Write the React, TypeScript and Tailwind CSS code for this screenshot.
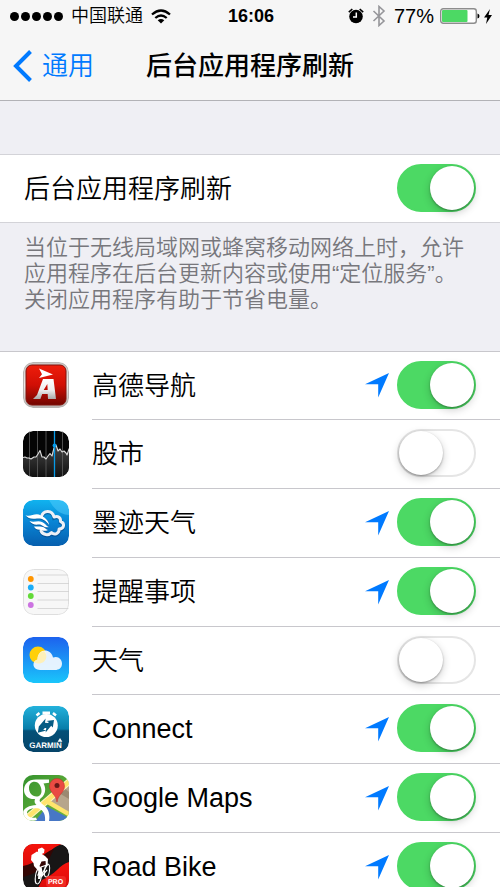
import { useState } from "react";
import type { ReactNode } from "react";

function Switch({ id, checked, onChange }: { id: string; checked: boolean; onChange: () => void }) {
  return (
    <input
      id={id}
      type="checkbox"
      role="switch"
      checked={checked}
      onChange={onChange}
      className="mb-[2px] h-12 w-[79px] shrink-0 cursor-pointer appearance-none rounded-full border-2 border-[#e5e5e5] bg-white transition-colors before:block before:size-11 before:rounded-full before:bg-white before:shadow-[0_3px_8px_rgba(0,0,0,0.2),0_1px_2px_rgba(0,0,0,0.3)] before:transition-transform before:content-[''] checked:border-[#4cd964] checked:bg-[#4cd964] checked:before:translate-x-[31px]"
    />
  );
}

function LocationArrow() {
  return (
    <svg viewBox="0 0 24 25" className="h-[25px] w-6 shrink-0" fill="#007aff" role="img" aria-label="定位服务">
      <path d="M24 0 13.2 24.5V11.2H0Z" />
    </svg>
  );
}

function IconFrame({ children }: { children: ReactNode }) {
  return (
    <svg viewBox="0 0 46 46" className="mb-[2px] size-[46px] shrink-0 overflow-hidden rounded-[10px]" aria-hidden="true">
      {children}
    </svg>
  );
}

function AmapIcon() {
  return (
    <IconFrame>
      <defs>
        <linearGradient id="amapRed" x2="0" y2="1">
          <stop stopColor="#ee1d0b" />
          <stop offset=".5" stopColor="#d10f05" />
          <stop offset="1" stopColor="#710500" />
        </linearGradient>
        <linearGradient id="amapRim" x2="0" y2="1">
          <stop stopColor="#c9c5c3" />
          <stop offset=".5" stopColor="#eeeae8" />
          <stop offset="1" stopColor="#b8b4b2" />
        </linearGradient>
        <linearGradient id="amapSteel" x2="0" y2="1">
          <stop stopColor="#fff" />
          <stop offset=".55" stopColor="#eee" />
          <stop offset="1" stopColor="#aaa" />
        </linearGradient>
      </defs>
      <rect width="46" height="46" rx="10" fill="#b9b4b2" />
      <rect x="1" y="1" width="44" height="44" rx="9" fill="url(#amapRim)" />
      <rect x="3" y="3" width="40" height="40" rx="6" fill="url(#amapRed)" stroke="#82120c" />
      <path d="M16 6.5 30 12.5 16 16 19 12.2Z" fill="#fff" />
      <path d="M20 17h10.5L33 37h-8l-.3-5h-5.5l-1.8 5H10L14 33ZM24.3 22l-3.600 6h4Z" fill="url(#amapSteel)" fillRule="evenodd" />
    </IconFrame>
  );
}

function StocksIcon() {
  const line =
    "M0 26.500 2 26l2 1 2 0 2 1 3-2 2 0 2-3 2-3.500 2 6.500 2 0 2 2 2-3 2-2.500 2 2.500 2-8 2-3 2 6 2-2 2 3 2-1 2 2 1 2 2-6 3-3";
  return (
    <IconFrame>
      <defs>
        <linearGradient id="stocksFill" x2="0" y2="1">
          <stop stopColor="#444" />
          <stop offset="1" stopColor="#111" />
        </linearGradient>
      </defs>
      <rect width="46" height="46" rx="10" fill="#050505" />
      <path d={`${line}V46H0Z`} fill="url(#stocksFill)" />
      <path d="M6.500 0v46M14.500 0v46M23 0v46M39.500 0v46" stroke="#606060" strokeWidth=".8" />
      <path d={line} fill="none" stroke="#ddd" strokeWidth="1.100" strokeLinejoin="round" />
      <path d="M31.500 0v46" stroke="#079be8" strokeWidth="1.300" />
      <circle cx="31.500" cy="14.500" r="1.900" fill="#079be8" />
    </IconFrame>
  );
}

function MojiIcon() {
  const cloud =
    "M18.500 16.500C20 10.500 29 9 31 17c4-1.500 7 .5 6.500 4.500 4.500 1.500 4 7.500-1.500 7.500.5 4.500-4.500 6.500-7.500 3.500-3 3.500-8.500 2.500-10.500-1.500";
  const feathers =
    "M2.500 15C7 18 12 12 18 15.500c5 2.500 8 6.500 8 9.500-4-6-8-7-12-6.500C9 19 5 19 2.500 15ZM6.500 21c4.500 2 8-1 12.500 1 4 2 4.500 4.500 7 5-5 1.500-6-2.500-10-2.500-4 .5-7 0-9.500-3.500ZM11 26.500c4 .5 6-.8 9 .5 2.500 1 3 2.500 5 3-4 2-6-.2-8.500-.2-2.500 0-4.500-1-5.500-3.300Z";
  return (
    <IconFrame>
      <defs>
        <linearGradient id="mojiSky" x2="0" y2="1">
          <stop stopColor="#10b3ef" />
          <stop offset=".5" stopColor="#0a83d3" />
          <stop offset="1" stopColor="#075fae" />
        </linearGradient>
      </defs>
      <rect width="46" height="46" rx="10" fill="url(#mojiSky)" />
      <path d="M26 0h20v15Q34 15 26 0Z" fill="#5bd1ff" opacity=".45" />
      <g transform="translate(0 1)" opacity=".55">
        <path d={cloud} fill="none" stroke="#06407c" strokeWidth="3.600" strokeLinecap="round" />
        <path d={feathers} fill="#06407c" />
      </g>
      <path d={cloud} fill="none" stroke="#eef0f6" strokeWidth="3" strokeLinecap="round" strokeLinejoin="round" />
      <path d={feathers} fill="#fff" />
    </IconFrame>
  );
}

function RemindersIcon() {
  return (
    <IconFrame>
      <rect x=".5" y=".5" width="45" height="45" rx="10" fill="#f7f7f7" stroke="#dedede" />
      <path d="M14.500 6H46M14.500 14.500H46M14.500 22.500H46M14.500 31H46M14.500 39.500H46" stroke="#cfcfcf" strokeWidth=".8" />
      <circle cx="7.800" cy="10" r="2.900" fill="#ff9500" />
      <circle cx="7.800" cy="18.500" r="2.900" fill="#1badf8" />
      <circle cx="7.800" cy="27" r="2.900" fill="#63da38" />
      <circle cx="7.800" cy="36" r="2.900" fill="#cc73e1" />
    </IconFrame>
  );
}

function WeatherIcon() {
  return (
    <IconFrame>
      <defs>
        <linearGradient id="weatherSky" x2="0" y2="1">
          <stop stopColor="#1d62ee" />
          <stop offset="1" stopColor="#1ac6fb" />
        </linearGradient>
      </defs>
      <rect width="46" height="46" rx="10" fill="url(#weatherSky)" />
      <circle cx="15" cy="18" r="8.500" fill="#ffd00a" />
      <path
        d="M17 33c-8 0-8.500-9-2.500-10.500C14.500 11 28 11 30 20.500c5-2 9 1.500 9 6s-3 6.500-7 6.500Z"
        fill="#f5faff"
        opacity=".92"
      />
      <path
        d="M14.500 22.500C14.500 18 17.500 14.500 21 14.200 23 16 24 19 23 21.500c-1 3-4 5-8 5-2 0-3-.5-4-1.200 0-1 1.500-2.300 3.500-2.800Z"
        fill="#ffefb0"
        opacity=".85"
      />
    </IconFrame>
  );
}

function GarminIcon() {
  return (
    <IconFrame>
      <defs>
        <linearGradient id="garminBlue" x2="0" y2="1">
          <stop stopColor="#23b2dc" />
          <stop offset=".5" stopColor="#087da9" />
          <stop offset=".54" stopColor="#045078" />
          <stop offset="1" stopColor="#064468" />
        </linearGradient>
      </defs>
      <rect width="46" height="46" rx="10" fill="url(#garminBlue)" />
      <path d="M19.500 5.500h7.500v3h-7.500Z" fill="#fff" />
      <path d="m13.500 9.500 3-2.500M30 7l3 2.500" stroke="#fff" strokeWidth="2.500" />
      <circle cx="23.300" cy="19.500" r="11.500" fill="#fff" />
      <path
        d="m15.800 20.500 6.800-8-.6 4.300 4.500.4-6.300 6.600 3.200.7-8.600 2.300ZM31 14l-1.200 7.500-1.600-1.800-5.600 6.800.7-4.500-3.600-.2 6.300-5.800-2.700-1Z"
        fill="#075c84"
      />
      <text x="22.500" y="42" textAnchor="middle" textRendering="geometricPrecision" className="fill-white text-[8px] font-bold">
        GARMIN
      </text>
      <path d="m37 32 2.400 3.800h-4.800Z" fill="#fff" />
    </IconFrame>
  );
}

function GoogleMapsIcon() {
  return (
    <IconFrame>
      <defs>
        <linearGradient id="mapsGreen" x2="1" y2="1">
          <stop stopColor="#35932e" />
          <stop offset="1" stopColor="#74b83d" />
        </linearGradient>
      </defs>
      <rect width="46" height="46" fill="url(#mapsGreen)" />
      <path d="M27 26 46 8v31Z" fill="#b6a58c" />
      <path d="m36 18 5-5 5 4v7Z" fill="#89765f" opacity=".6" />
      <path d="M12 46 24 31.500 46 43v3Z" fill="#4777c6" />
      <path d="M-2 48 48 5" stroke="#fff5c3" strokeWidth="6.500" />
      <path d="M-2 48 48 5" stroke="#ffe46d" strokeWidth="4.500" />
      <path d="m25 27 24 14" stroke="#ffe46d" strokeWidth="4.500" />
      <path
        d="M26 4.500H13C5 4.500 1 9.500 1 15c0 6 5 9.500 11 9-1 3 0 4.500 1.500 6C5 30.500-1 34 0 39.500c1 5 8 7.500 14 5.500l-1-2.500c-5 1-9-1-9-4.500 0-3.500 5-5.500 12-4.500 5 2.500 6.500 6.500 6 12.500h4c1.500-8-1.500-13-5.500-16-3.500-2.500-5-4-3-6.500 5-3.500 6-10 3-15l5.500-.7ZM11.500 6.800c4.500 0 7 5 7 9.200 0 3.500-2 5.500-5 5.500-4.500 0-7.500-4-7.500-8.500 0-3.500 2-6.200 5.500-6.200Z"
        fill="#fff"
        fillRule="evenodd"
      />
      <path d="M34 27c-1-8-7.500-9-7.500-16a7.500 7.500 0 0 1 15 0c0 7-6.500 8-7.500 16Z" fill="#ea4b43" stroke="#bf2f28" strokeWidth=".5" />
      <circle cx="34" cy="10.500" r="2.500" fill="#681818" />
    </IconFrame>
  );
}

function RoadBikeIcon() {
  return (
    <IconFrame>
      <defs>
        <linearGradient id="bikeRed" x2="0" y2="1">
          <stop stopColor="#f5140c" />
          <stop offset="1" stopColor="#da0c0a" />
        </linearGradient>
      </defs>
      <rect width="46" height="46" rx="10" fill="#181616" />
      <path d="M0 0h39C22 6 22 20 0 25Z" fill="url(#bikeRed)" />
      <path d="M0 22C14 20 20 8 31 5c-5 9-7 22-31 28Z" fill="#330604" />
      <path d="M46 18C37 20 32 31 19 36l-5 10h32Z" fill="url(#bikeRed)" />
      <path d="m15 5 4-1.500 2.500 2L21 9l-3.500 1.500L15 8.500Z" fill="#fff" />
      <path
        d="m14 7.500 4 2 4 2.500 3 3-.5 7-1.500.5-.5-5.500-4 .5-2 4.500 2.500 3.500-1.500 9.500h-2.500l.5-8-4.500-5-.5-3-2.500-3 .5-5Z"
        fill="#fff"
      />
      <ellipse cx="15.500" cy="32" rx="3" ry="8" fill="none" stroke="#fff" strokeWidth="1" transform="rotate(10 15.500 32)" />
      <ellipse cx="24" cy="26.500" rx="2.500" ry="6.500" fill="none" stroke="#fff" strokeWidth="1" transform="rotate(7 24 26.500)" />
      <path d="m15 31 3-8 6-2-5 9Zm3-8 1 9 5-6" fill="none" stroke="#fff" strokeWidth="1.200" />
      <rect x="23" y="32" width="20" height="11" rx="3" fill="#ef2922" />
      <text x="32.500" y="40" textAnchor="middle" textRendering="geometricPrecision" className="fill-white text-[7px] font-bold">
        PRO
      </text>
    </IconFrame>
  );
}

type AppEntry = { id: string; name: string; icon: ReactNode; location: boolean; on: boolean; latin?: boolean };

const APPS: AppEntry[] = [
  { id: "amap", name: "高德导航", icon: <AmapIcon />, location: true, on: true },
  { id: "stocks", name: "股市", icon: <StocksIcon />, location: false, on: false },
  { id: "moji", name: "墨迹天气", icon: <MojiIcon />, location: true, on: true },
  { id: "reminders", name: "提醒事项", icon: <RemindersIcon />, location: true, on: true },
  { id: "weather", name: "天气", icon: <WeatherIcon />, location: false, on: false },
  { id: "connect", name: "Connect", icon: <GarminIcon />, location: true, on: true, latin: true },
  { id: "maps", name: "Google Maps", icon: <GoogleMapsIcon />, location: true, on: true, latin: true },
  { id: "bike", name: "Road Bike", icon: <RoadBikeIcon />, location: true, on: true, latin: true },
];

function StatusBar() {
  return (
    <div className="grid h-8 grid-cols-[1fr_auto_1fr] items-center pr-2 pl-[10px]">
      <div className="flex items-center gap-2">
        <div className="flex gap-[2px]" role="img" aria-label="信号">
          {[0, 1, 2, 3, 4].map((n) => (
            <span key={n} className="size-[9px] rounded-full bg-black" />
          ))}
        </div>
        <span className="text-lg leading-6 font-[350]">中国联通</span>
        <svg viewBox="0 0 20 15" className="h-[15px] w-5" fill="none" stroke="#000" strokeWidth="2.300" role="img" aria-label="Wi-Fi">
          <path d="M1 5.500Q10-2.500 19 5.500M4.300 9Q10 4 15.700 9" />
          <path d="M6.700 11.300Q10 8.500 13.300 11.300L10 14.500Z" fill="#000" stroke="none" />
        </svg>
      </div>
      <span className="text-lg leading-6 font-bold">16:06</span>
      <div className="flex items-center justify-end">
        <svg viewBox="0 0 16 16" className="mr-2 size-4" role="img" aria-label="闹钟">
          <circle cx="8" cy="8.500" r="6.800" fill="#000" />
          <path d="M.8 4.200 4.300 1M11.700 1l3.500 3.200" stroke="#000" strokeWidth="1.600" />
          <path d="M8.300 4.500V9H5" fill="none" stroke="#fff" strokeWidth="1.500" />
        </svg>
        <svg viewBox="0 0 14 22" className="mr-2 h-[22px] w-[14px]" fill="none" stroke="#96969a" strokeWidth="1.600" role="img" aria-label="蓝牙">
          <path d="M1.500 6 12 16l-5 4.500V1.500L12 6 1.500 16" />
        </svg>
        <span className="mr-[6px] text-xl leading-6">77%</span>
        <svg viewBox="0 0 40 16" className="mr-1 h-4 w-10" role="img" aria-label="电量 77%">
          <rect x=".7" y=".7" width="35.600" height="14.600" rx="2.500" fill="#fff" stroke="#8d8d8d" strokeWidth="1.400" />
          <rect x="2" y="2" width="25.500" height="12" rx="1" fill="#4cd964" />
          <path d="M37.500 5.500Q39.500 6 39.500 8t-2 2.500Z" fill="#000" />
        </svg>
        <svg viewBox="0 0 8 15" className="h-[15px] w-2" role="img" aria-label="充电中">
          <path d="M6 0 0 8.500h3.300L2 15 8 6H4.500Z" />
        </svg>
      </div>
    </div>
  );
}

export default function App() {
  const [master, setMaster] = useState(true);
  const [enabled, setEnabled] = useState<Record<string, boolean>>(
    Object.fromEntries(APPS.map((app) => [app.id, app.on])),
  );

  return (
    <div
      lang="zh-CN"
      className="flex h-screen flex-col overflow-hidden bg-[#efeff4] font-['Liberation_Sans','Noto_Sans_CJK_SC',sans-serif] text-black"
    >
      <header className="shrink-0 border-b border-[#b2b2b6] bg-[#f6f6f6]">
        <StatusBar />
        <nav className="grid h-[68px] grid-cols-[1fr_auto_1fr] items-center px-3">
          <button type="button" className="flex items-center gap-[10px] text-[26px] leading-8 font-[350] text-[#007aff]">
            <svg viewBox="0 0 20 32" className="h-8 w-5" fill="none" stroke="#007aff" strokeWidth="4" aria-hidden="true">
              <path d="M18.500 1.500 4 16l14.500 14.500" />
            </svg>
            通用
          </button>
          <h1 className="text-[26px] leading-8 font-medium">后台应用程序刷新</h1>
        </nav>
      </header>

      <main className="min-h-0 flex-1 overflow-y-auto pt-[53px] [scrollbar-width:none]">
        <div className="flex h-[69px] items-center justify-between border-y border-[#d3d3d8] bg-white pr-6 pl-6">
          <label htmlFor="master" className="text-[26px] leading-8 font-[350]">
            后台应用程序刷新
          </label>
          <Switch id="master" checked={master} onChange={() => setMaster(!master)} />
        </div>

        <p className="px-6 pt-3 pb-[38px] text-[22px] leading-[26px] font-[350] text-[#77777c]">
          当位于无线局域网或蜂窝移动网络上时，允许
          <br />
          应用程序在后台更新内容或使用“定位服务”。
          <br />
          关闭应用程序有助于节省电量。
        </p>

        <ul className="border-t border-[#c8c7cc] bg-white pl-[23px]">
          {APPS.map((app) => (
            <li key={app.id} className="flex h-[69px] items-center gap-[23px] nth-[4n+1]:h-[68px]">
              {app.icon}
              <div className="flex h-full flex-1 items-center gap-2 border-b border-[#c8c7cc] pr-6">
                <label
                  htmlFor={app.id}
                  className={app.latin ? "flex-1 text-[27px] leading-8" : "flex-1 text-[26px] leading-8 font-[350]"}
                >
                  {app.name}
                </label>
                {app.location && <LocationArrow />}
                <Switch
                  id={app.id}
                  checked={enabled[app.id]}
                  onChange={() => setEnabled({ ...enabled, [app.id]: !enabled[app.id] })}
                />
              </div>
            </li>
          ))}
        </ul>
      </main>
    </div>
  );
}
